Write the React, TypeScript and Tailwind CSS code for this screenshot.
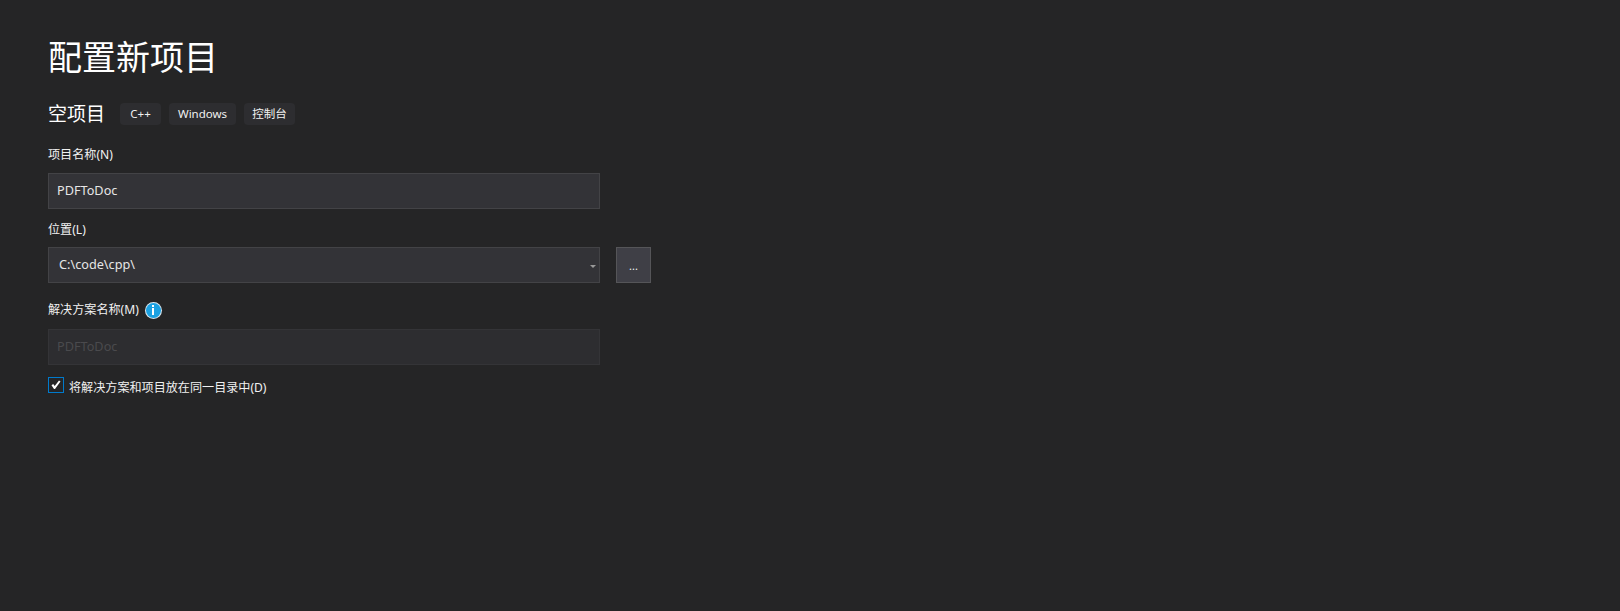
const tags = [
  { label: 'C++', width: 'w-[41px]' },
  { label: 'Windows', width: 'w-[67px]' },
  { label: '控制台', width: 'w-[51px]' },
];

const fontStack = "font-['Noto_Sans','Noto_Sans_CJK_SC',sans-serif]";

export default function App() {
  return (
    <div className={`h-[611px] w-[1620px] overflow-hidden bg-[#252526] pl-[48px] pt-[32px] text-[#f1f1f1] ${fontStack}`}>
      <h1 className="h-[50px] text-[34px] font-normal leading-[50px] text-white">配置新项目</h1>

      {/* Template summary */}
      <div className="mt-[20px] flex h-[24px] items-center">
        <h2 className="w-[72px] text-[19px] font-normal leading-[24px] text-white">空项目</h2>
        <ul className="flex gap-[8px]">
          {tags.map((tag) => (
            <li key={tag.label} className={`flex h-[22px] items-center justify-center rounded-[4px] bg-[#2d2d30] text-[11.5px] leading-none ${tag.width}`}>
              {tag.label}
            </li>
          ))}
        </ul>
      </div>

      {/* Form */}
      <label className="mt-[20px] block h-[18px] text-[12.1px] leading-[18px]">项目名称(N)</label>
      <div className="mt-[9px] flex h-[36px] w-[552px] items-center border border-[#434346] bg-[#333337] pl-[8px] text-[12.7px] text-[#e6e6e6]">
        PDFToDoc
      </div>

      <label className="mt-[12px] block h-[18px] text-[12.1px] leading-[18px]">位置(L)</label>
      <div className="mt-[8px] flex gap-[16px]">
        <div className="relative flex h-[36px] w-[552px] items-center border border-[#434346] bg-[#333337] pl-[10px] text-[12.7px] text-[#e6e6e6]">
          C:\code\cpp\
          <span className="absolute right-[3px] top-[17px] h-0 w-0 border-x-[3px] border-t-[3px] border-x-transparent border-t-[#999999]" />
        </div>
        <button className="flex h-[36px] w-[35px] items-center justify-center border border-[#555558] bg-[#3f3f46] pt-[1px] text-[11px] leading-none">
          ...
        </button>
      </div>

      <div className="mt-[18px] flex h-[18px] items-center gap-[7px]">
        <label className="text-[12.1px] leading-[18px]">解决方案名称(M)</label>
        <span className="flex h-[15px] w-[15px] items-center justify-center rounded-full bg-[#1ba1e2] ring-1 ring-[#d8e6ee]">
          <svg width="4" height="10" viewBox="0 0 4 10" fill="white">
            <rect x="1" y="0" width="2" height="2" />
            <rect x="1" y="3" width="2" height="7" />
          </svg>
        </span>
      </div>
      <div className="mt-[10px] flex h-[36px] w-[552px] items-center border border-[#343437] bg-[#2d2d30] pl-[8px] text-[12.7px] text-[#4a4a4d]">
        PDFToDoc
      </div>

      <div className="mt-[12px] flex items-start">
        <span className="flex h-[16px] w-[16px] items-center justify-center border border-[#007acc] bg-[#252526]">
          <svg width="10" height="10" viewBox="0 0 10 10" fill="white">
            <path d="M0.5 5.2 L2.2 4 L3.7 6 L8 0.5 L9.5 1.5 L4 9 L3 9 Z" />
          </svg>
        </span>
        <span className="ml-[5px] mt-[2px] text-[12.1px] leading-[18px]">将解决方案和项目放在同一目录中(D)</span>
      </div>
    </div>
  );
}
